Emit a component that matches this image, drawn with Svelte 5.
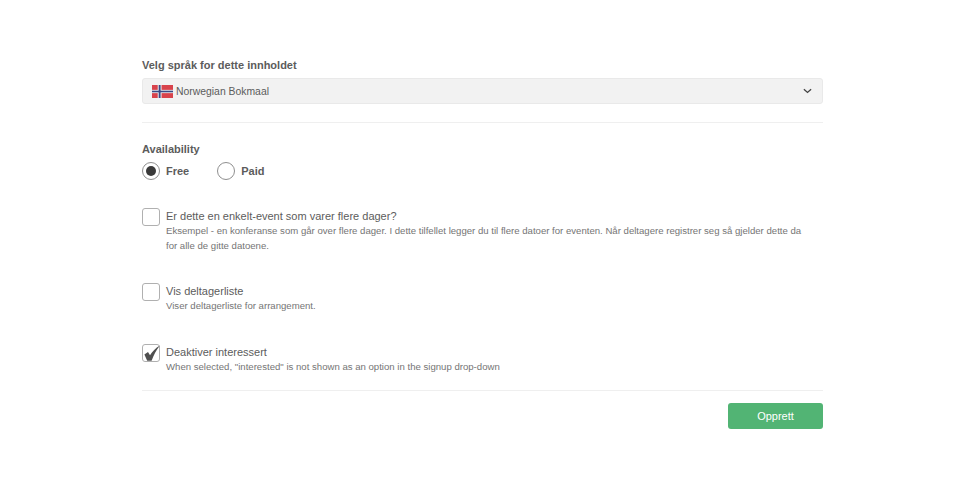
<script>
  let availability = $state("free");
  let multiDay = $state(false);
  let showList = $state(false);
  let noInterested = $state(true);
</script>

<div class="page">
  <form class="form" onsubmit={(e) => e.preventDefault()}>
    <div class="label">Velg språk for dette innholdet</div>
    <div class="select">
      <svg class="flag" viewBox="0 0 22 16" width="21" height="13" preserveAspectRatio="none">
        <rect width="22" height="16" fill="#d8434c" />
        <rect x="6" width="4" height="16" fill="#f4f4f4" />
        <rect y="6" width="22" height="4" fill="#f4f4f4" />
        <rect x="7" width="2" height="16" fill="#3a4a86" />
        <rect y="7" width="22" height="2" fill="#3a4a86" />
      </svg>
      <span class="lang">Norwegian Bokmaal</span>
      <svg class="chev" viewBox="0 0 10 6" width="9" height="6">
        <path d="M1 1l4 3.6L9 1" fill="none" stroke="#444" stroke-width="1.5" />
      </svg>
    </div>

    <hr class="first" />

    <div class="label">Availability</div>
    <div class="radios">
      <button type="button" class="radio" onclick={() => (availability = "free")}>
        <span class="dot" class:on={availability === "free"}></span>Free
      </button>
      <button type="button" class="radio" onclick={() => (availability = "paid")}>
        <span class="dot" class:on={availability === "paid"}></span>Paid
      </button>
    </div>

    <div class="check one">
      <button type="button" class="box" aria-label="toggle" onclick={() => (multiDay = !multiDay)}></button>
      <div>
        <div class="title">Er dette en enkelt-event som varer flere dager?</div>
        <div class="desc">Eksempel - en konferanse som går over flere dager. I dette tilfellet legger du til flere datoer for eventen. Når deltagere registrer seg så gjelder dette da for alle de gitte datoene.</div>
      </div>
    </div>

    <div class="check two">
      <button type="button" class="box" aria-label="toggle" onclick={() => (showList = !showList)}></button>
      <div>
        <div class="title">Vis deltagerliste</div>
        <div class="desc">Viser deltagerliste for arrangement.</div>
      </div>
    </div>

    <div class="check three">
      <button type="button" class="box" aria-label="toggle" onclick={() => (noInterested = !noInterested)}>
        {#if noInterested}
          <svg viewBox="0 0 18 18" width="18" height="18">
            <path d="M2.4 10.4L6 8l2 3.2C10.4 7.6 13.4 4 18 1.4 14.2 6.2 11.6 11 9.6 16.8H5.2z" fill="#4f4f4f" />
          </svg>
        {/if}
      </button>
      <div>
        <div class="title">Deaktiver interessert</div>
        <div class="desc">When selected, "interested" is not shown as an option in the signup drop-down</div>
      </div>
    </div>

    <hr class="last" />

    <div class="actions">
      <button type="submit" class="submit">Opprett</button>
    </div>
  </form>
</div>

<style>
  :global(body) {
    margin: 0;
    background: #fff;
  }

  .page {
    height: 501px;
    padding: 59px 145px 0 142px;
    box-sizing: border-box;
    font-family: "Liberation Sans", Arial, sans-serif;
    color: #4a4a4a;
  }

  .label {
    font-size: 11px;
    font-weight: bold;
    line-height: 13px;
    color: #5c5c5c;
  }

  .select {
    display: flex;
    align-items: center;
    height: 26px;
    margin-top: 6px;
    padding: 0 10px 0 9px;
    box-sizing: border-box;
    background: #f2f2f2;
    border: 1px solid #e9e9e9;
    border-radius: 3px;
  }

  .flag {
    margin-right: 3px;
  }

  .lang {
    flex: 1;
    font-size: 10.4px;
    color: #5c5c5c;
  }

  hr {
    border: 0;
    border-top: 1px solid #efefef;
    margin: 0;
  }

  hr.first {
    margin: 18px 0 20px;
  }

  .radios {
    display: flex;
    gap: 28px;
    margin-top: 6px;
  }

  .radio {
    display: flex;
    align-items: center;
    gap: 6px;
    padding: 0;
    border: 0;
    background: none;
    font: bold 11px "Liberation Sans", Arial, sans-serif;
    color: #5c5c5c;
  }

  .dot {
    width: 18px;
    height: 18px;
    box-sizing: border-box;
    border: 1px solid #8f8f8f;
    border-radius: 50%;
    display: flex;
    align-items: center;
    justify-content: center;
  }

  .dot.on::after {
    content: "";
    width: 10px;
    height: 10px;
    border-radius: 50%;
    background: #3a3a3a;
  }

  .check {
    display: flex;
    gap: 6px;
  }

  .check.one {
    margin-top: 28px;
  }

  .check.two {
    margin-top: 30px;
  }

  .check.three {
    margin-top: 31px;
  }

  .box {
    flex: none;
    width: 18px;
    height: 18px;
    padding: 0;
    box-sizing: border-box;
    border: 1px solid #b0b0b0;
    border-radius: 3px;
    background: #fff;
    position: relative;
  }

  .box svg {
    position: absolute;
    left: -1px;
    top: -1px;
  }

  .title {
    font-size: 11px;
    line-height: 13px;
    margin-top: 2px;
    color: #5c5c5c;
  }

  .desc {
    font-size: 9.6px;
    line-height: 15px;
    color: #757575;
    padding-right: 14px;
  }

  hr.last {
    margin: 16px 0 12px;
  }

  .actions {
    display: flex;
    justify-content: flex-end;
  }

  .submit {
    width: 95px;
    height: 26px;
    border: 0;
    border-radius: 3px;
    background: #52b474;
    color: #fff;
    font: 11px "Liberation Sans", Arial, sans-serif;
  }
</style>
